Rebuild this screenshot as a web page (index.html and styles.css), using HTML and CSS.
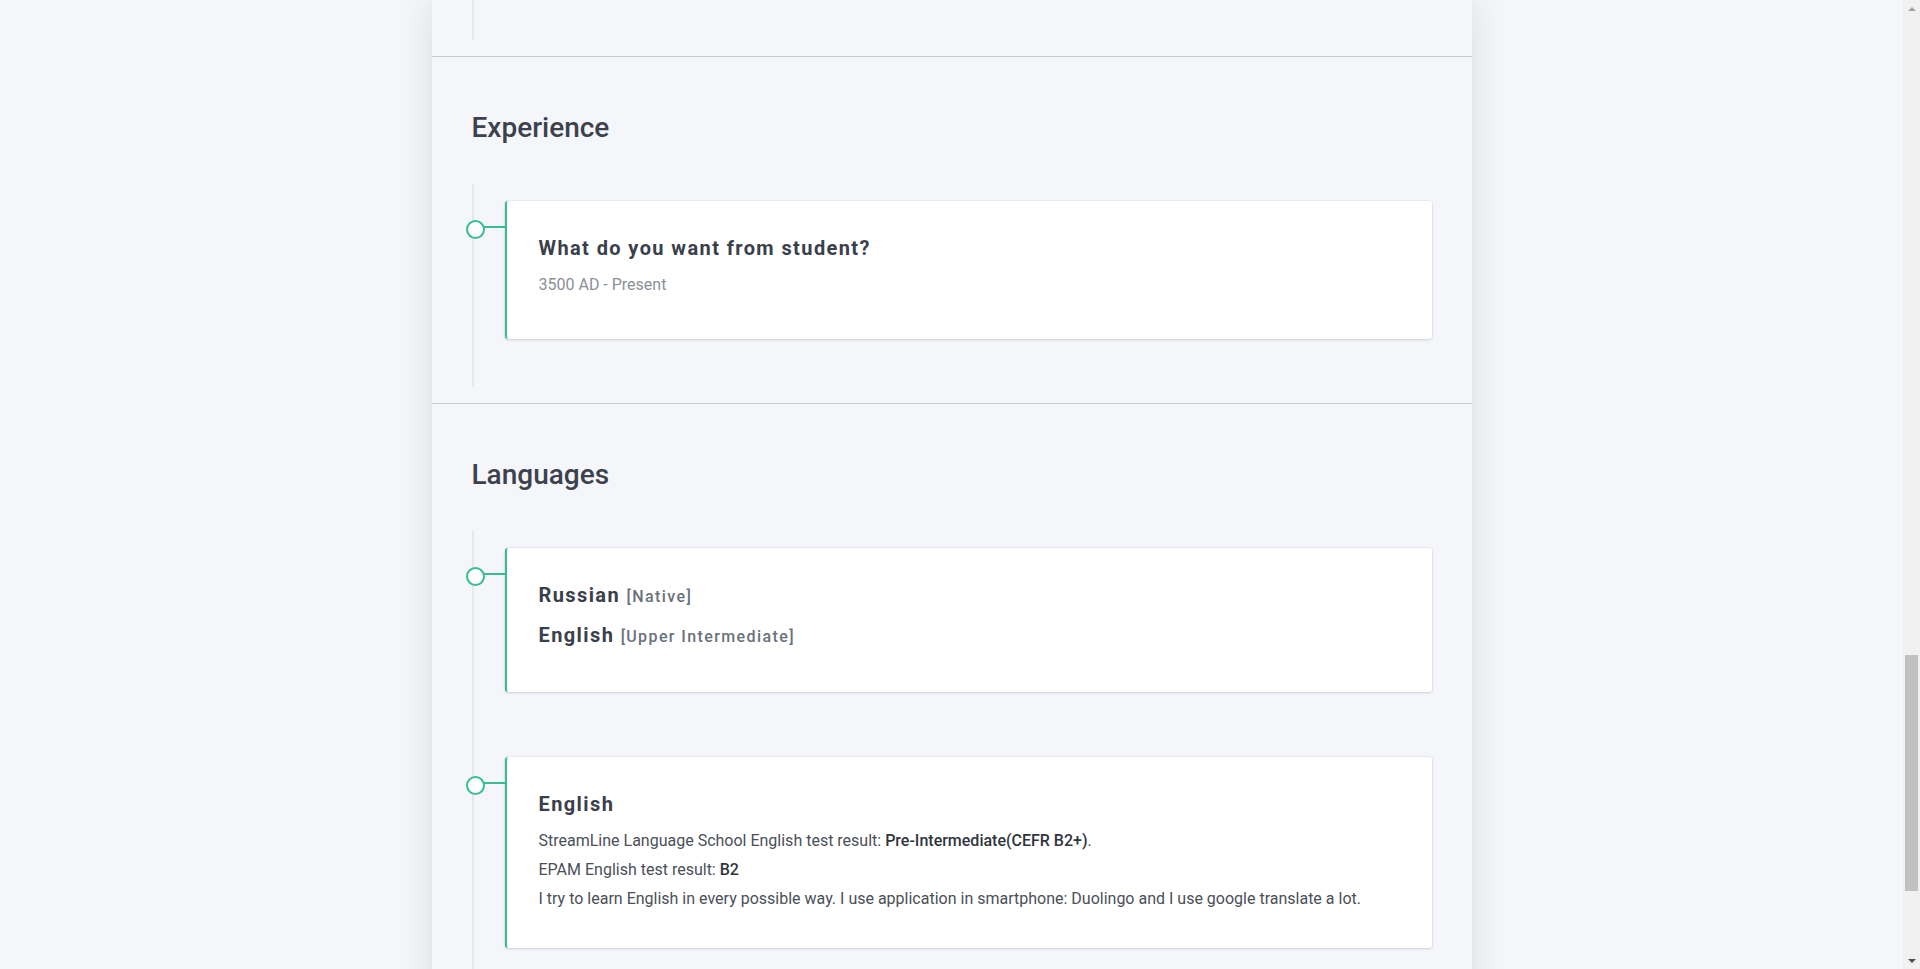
FILE: index.html
```html
<!DOCTYPE html>
<html lang="en">
<head>
<meta charset="utf-8">
<title>Resume</title>
<link rel="stylesheet" href="styles.css">
</head>
<body>
<div class="viewport">
  <main class="page">
    <div class="container">
      <section class="section section-cut">
        <div class="timeline timeline-cut"></div>
      </section>

      <section class="section">
        <h2 class="section-title">Experience</h2>
        <div class="timeline">
          <div class="item">
            <div class="card">
              <h3 class="card-title">What do you want from student?</h3>
              <p class="card-date">3500 AD - Present</p>
            </div>
          </div>
        </div>
      </section>

      <section class="section">
        <h2 class="section-title">Languages</h2>
        <div class="timeline">
          <div class="item">
            <div class="card">
              <h3 class="card-title">Russian <span class="level">[Native]</span></h3>
              <h3 class="card-title">English <span class="level">[Upper Intermediate]</span></h3>
            </div>
          </div>
          <div class="item">
            <div class="card">
              <h3 class="card-title">English</h3>
              <p class="card-text">StreamLine Language School English test result: <b>Pre-Intermediate(CEFR B2+)</b>.</p>
              <p class="card-text">EPAM English test result: <b>B2</b></p>
              <p class="card-text">I try to learn English in every possible way. I use application in smartphone: Duolingo and I use google translate a lot.</p>
            </div>
          </div>
        </div>
      </section>
    </div>
  </main>
  <div class="scrollbar" aria-hidden="true">
    <div class="sb-btn"><span class="tri tri-up"></span></div>
    <div class="sb-track"><div class="sb-thumb"></div></div>
    <div class="sb-btn"><span class="tri tri-down"></span></div>
  </div>
</div>
</body>
</html>
```

FILE: styles.css
```css
* { box-sizing: border-box; }

html, body {
  margin: 0;
  padding: 0;
  height: 969px;
  overflow: hidden;
}

body {
  font-family: Roboto, "Liberation Sans", Arial, sans-serif;
  background: #f5f6f9;
  color: #3d4350;
}

.viewport {
  display: flex;
  height: 969px;
}

.page {
  flex: 1;
  overflow: hidden;
  background: #f5f6f9;
}

.container {
  width: 1040px;
  margin: 0 auto;
  min-height: 969px;
  background: #f5f6fa;
  box-shadow: 0 0 34px rgba(40, 45, 60, 0.13);
}

.section {
  padding: 54px 40px 16px;
  border-bottom: 1px solid #c6cbd2;
}

.section-cut {
  padding-top: 0;
}

.section-title {
  margin: 0 0 39px;
  font-size: 28px;
  line-height: 34px;
  font-weight: 500;
  color: #3c424d;
}

.timeline {
  border-left: 2px solid #e5e7eb;
  padding: 17px 0 48px 31px;
}

.timeline-cut {
  height: 40px;
  padding: 0;
}

.item {
  position: relative;
}

.item + .item {
  margin-top: 65px;
}

.item::before {
  content: "";
  position: absolute;
  left: -24px;
  top: 25px;
  width: 24px;
  height: 2px;
  background: #37bd90;
}

.item::after {
  content: "";
  position: absolute;
  left: -39px;
  top: 19px;
  width: 15px;
  height: 15px;
  border: 2px solid #37bd90;
  border-radius: 50%;
  background: #ffffff;
}

.card {
  background: #ffffff;
  border-left: 2px solid #37bd90;
  border-radius: 3px;
  padding: 32px 32px;
  box-shadow: 0 1px 3px rgba(0, 0, 0, 0.13), 0 0 0 1px rgba(0, 0, 0, 0.035);
}

.card-title {
  margin: 0 0 10px;
  font-size: 20px;
  line-height: 30px;
  font-weight: 700;
  letter-spacing: 1.4px;
  color: #3a404b;
}

.level {
  font-size: 16px;
  line-height: 1;
  font-weight: 500;
  letter-spacing: 1.4px;
  color: #6b717b;
}

.card-date {
  margin: 0 0 10px;
  font-size: 16px;
  line-height: 24px;
  color: #8a8f97;
}

.card-text {
  margin: 0 0 5px;
  font-size: 16px;
  line-height: 24px;
  color: #4a4f58;
}

.card-text b {
  font-weight: 500;
  color: #30353d;
}

.scrollbar {
  width: 17px;
  flex: none;
  background: #f1f1f1;
  display: flex;
  flex-direction: column;
}

.sb-btn {
  height: 17px;
  display: flex;
  align-items: center;
  justify-content: center;
}

.tri {
  width: 0;
  height: 0;
  border-left: 4px solid transparent;
  border-right: 4px solid transparent;
}

.tri-up {
  border-bottom: 4px solid #a3a3a3;
}

.tri-down {
  border-top: 4px solid #505050;
}

.sb-track {
  flex: 1;
  padding: 638px 2px 0;
}

.sb-thumb {
  height: 236px;
  background: #c1c1c1;
}
```
